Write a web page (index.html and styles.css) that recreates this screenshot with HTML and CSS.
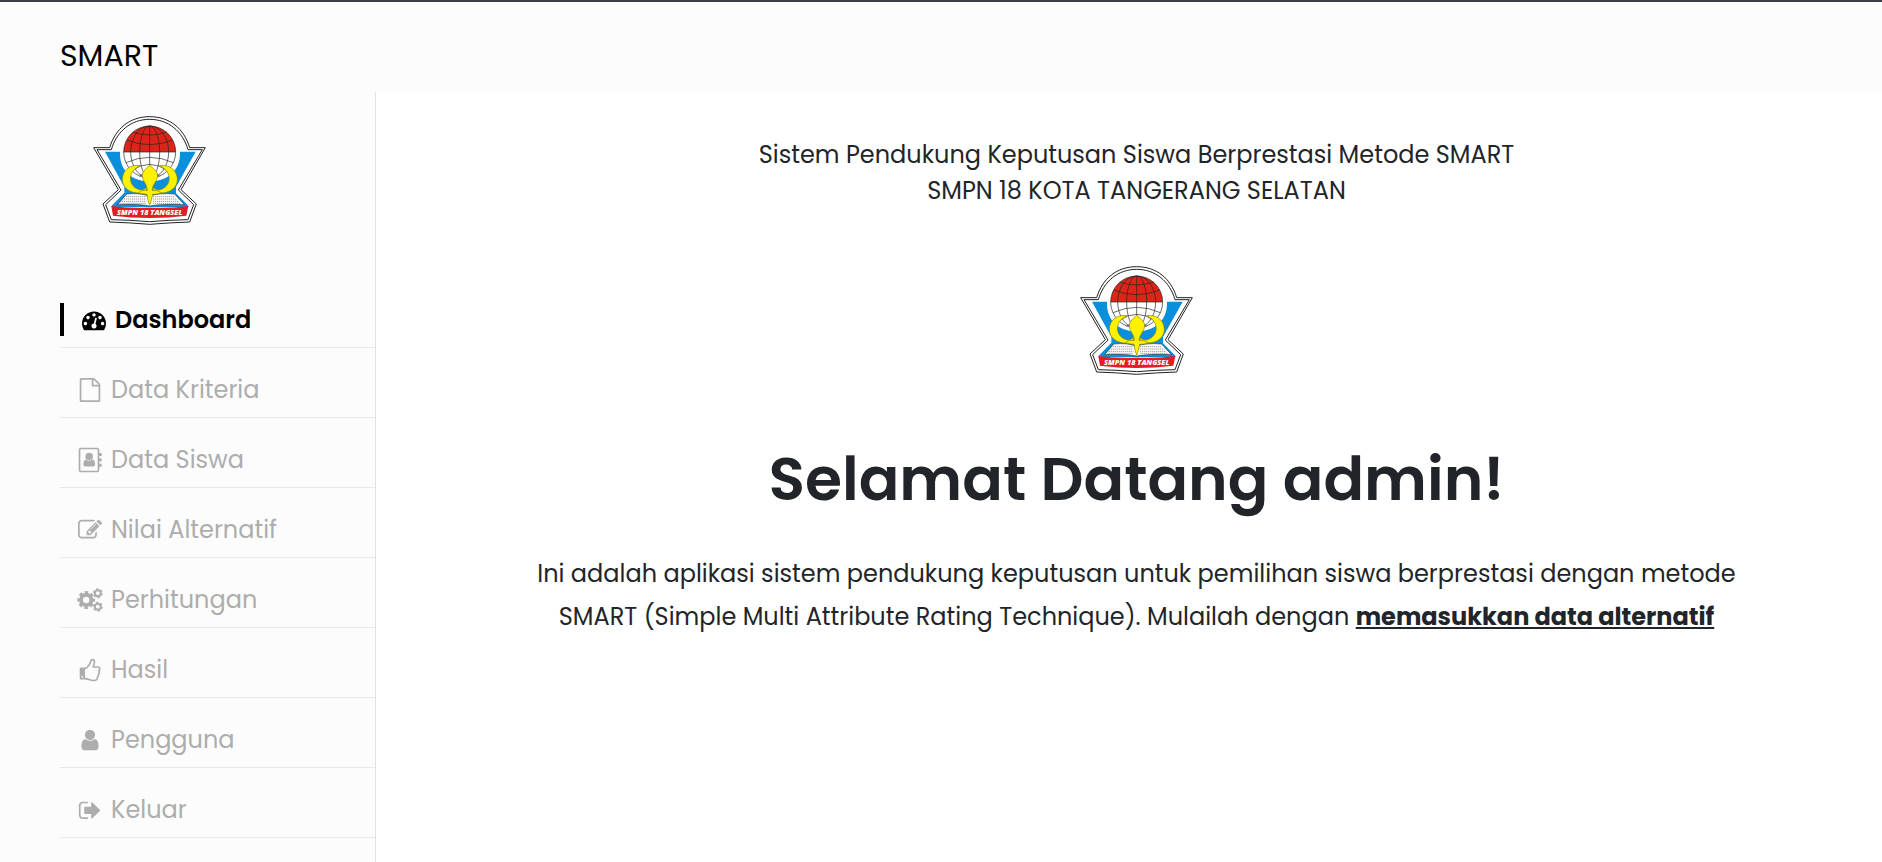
FILE: index.html
```html
<!DOCTYPE html>
<html lang="id">
<head>
<meta charset="utf-8">
<meta name="viewport" content="width=device-width, initial-scale=1">
<title>SMART</title>
<link rel="stylesheet" href="styles.css">
</head>
<body>
<svg class="defs" aria-hidden="true">
  <defs>
    <clipPath id="north"><rect x="100" y="40" width="190" height="92"/></clipPath>
    <symbol id="emblem" viewBox="0 0 390 372">
      <path d="M26 119H74C91 62 134 26 194 26S297 62 314 119H361L288 245L334 288L314 342Q254 344 194 349Q134 344 74 342L54 288L100 245Z" fill="#fff" stroke="#222" stroke-width="3"/>
      <path d="M36 125H79C95 70 138 34 194 34S293 70 309 125H352L280 246L326 290L309 335Q254 336 194 341Q134 336 79 335L62 290L108 246Z" fill="#fff" stroke="#222" stroke-width="3"/>
      <path d="M60 131H105C103 190 143 220 194 220S287 190 285 131H332L273 237V256L310 293V298H80V293L118 254V237Z" fill="#0a8fdc"/>
      <circle cx="194" cy="134" r="86" fill="#fff"/>
      <circle cx="194" cy="132" r="78" fill="#dd2418" clip-path="url(#north)"/>
      <g fill="none" stroke="#222" stroke-width="2">
        <circle cx="194" cy="132" r="78"/>
        <ellipse cx="194" cy="132" rx="57" ry="78"/>
        <ellipse cx="194" cy="132" rx="30" ry="78"/>
        <path d="M194 54V210M116 132H272M125 96Q194 124 263 96M143 72Q194 90 245 72M123 164Q194 132 265 164M140 188Q194 150 248 188M164 204Q194 180 224 204"/>
      </g>
      <path d="M98 290L125 258Q164 254 192 264Q226 254 269 258L298 290Q232 287 194 294Q160 287 98 290Z" fill="#fff" stroke="#333" stroke-width="2"/>
      <path d="M122 266H184M116 273H184M110 280H184M106 286H184M204 266H268M204 273H275M204 280H280M204 286H288" stroke="#888" stroke-width="2.500" stroke-dasharray="4 2"/>
      <g fill="#fff200" stroke="#8a8200" stroke-width="2">
        <path d="M165 173C132 168 112 190 112 214C112 241 137 256 164 255C179 254 187 244 187 237C181 243 174 246 167 246C129 238 124 192 165 173Z"/>
        <path d="M224 173C257 168 277 190 277 214C277 241 252 256 225 255C210 254 202 244 202 237C208 243 215 246 222 246C260 238 265 192 224 173Z"/>
        <path d="M194 172C186 180 172 189 172 203C172 220 187 228 187 247Q165 246 160 255Q180 259 186 259Q189 282 194 291Q199 282 203 259Q214 259 230 255Q220 246 201 247C202 228 218 220 218 203C218 189 203 180 194 172Z"/>
      </g>
      <path d="M79 294Q136 302 194 299Q252 302 310 294L304 323Q252 330 194 330Q136 330 84 323Z" fill="#e31d24"/>
      <text x="194" y="321" text-anchor="middle" class="emblem-text">SMPN 18 TANGSEL</text>
    </symbol>
  </defs>
</svg>

<header class="topbar"><a class="brand" href="#">SMART</a></header>

<div class="layout">
  <aside class="sidebar">
    <svg class="logo side-logo" role="img" aria-label="SMPN 18 Tangsel"><use href="#emblem"/></svg>
    <nav>
      <ul class="menu">
        <li><a class="active" href="#">
          <svg class="icon" viewBox="0 0 1792 1792"><path d="M384 1152q0-53-37.500-90.500t-90.500-37.500-90.500 37.500-37.500 90.500 37.500 90.500 90.500 37.500 90.500-37.500 37.500-90.500zm192-448q0-53-37.500-90.500t-90.500-37.500-90.500 37.500-37.500 90.500 37.500 90.500 90.500 37.500 90.500-37.500 37.500-90.500zm428 481l101-382q6-26-7.500-48.500t-38.500-29.500-48 6.500-30 39.500l-101 382q-60 5-107 43.500t-63 98.500q-20 77 20 146t117 89 146-20 89-117q16-60-6-117t-72-91zm660-33q0-53-37.500-90.500t-90.500-37.500-90.500 37.500-37.500 90.500 37.500 90.500 90.500 37.500 90.500-37.500 37.500-90.500zm-640-640q0-53-37.500-90.500t-90.500-37.500-90.500 37.500-37.500 90.500 37.500 90.500 90.500 37.500 90.500-37.500 37.500-90.500zm448 192q0-53-37.500-90.500t-90.500-37.500-90.500 37.500-37.500 90.500 37.500 90.500 90.500 37.500 90.500-37.500 37.500-90.500zm320 448q0 261-141 483-19 29-54 29h-1402q-35 0-54-29-141-221-141-483 0-182 71-348t191-286 286-191 348-71 348 71 286 191 191 286 71 348z"/></svg>
          <span>Dashboard</span></a></li>
        <li><a href="#">
          <svg class="icon" viewBox="0 0 1792 1792"><path d="M1596 380q28 28 48 76t20 88v1152q0 40-28 68t-68 28h-1344q-40 0-68-28t-28-68v-1600q0-40 28-68t68-28h896q40 0 88 20t76 48zm-444-244v376h376q-10-29-22-41l-313-313q-12-12-41-22zm384 1528v-1024h-416q-40 0-68-28t-28-68v-416h-768v1536h1280z"/></svg>
          <span>Data Kriteria</span></a></li>
        <li><a href="#">
          <svg class="icon" viewBox="0 0 24 24"><rect x="1.500" y=".5" width="19" height="23" rx="1.500" fill="none" stroke="currentColor" stroke-width="1.700"/><path d="M21 5h2.700v3H21zM21 10.400h2.700v3H21zM21 15.800h2.700v3H21z"/><circle cx="11.200" cy="8.500" r="3.800"/><path d="M5.400 16.600c0-3 .8-5 2.800-5.100 1.800 1.600 4.200 1.600 6 0 2 .1 2.900 2.100 2.900 5.100 0 1.200-.7 1.800-1.700 1.800H7.100c-1 0-1.700-.6-1.700-1.800z"/></svg>
          <span>Data Siswa</span></a></li>
        <li><a href="#">
          <svg class="icon" viewBox="0 0 1792 1792"><path d="M888 1184l116-116-152-152-116 116v56h96v96h56zm440-720q-16-16-33 1l-350 350q-17 17-1 33t33-1l350-350q17-17 1-33zm80 594v190q0 119-84.500 203.500t-203.500 84.500h-832q-119 0-203.500-84.500t-84.500-203.500v-832q0-119 84.500-203.500t203.500-84.500h832q63 0 117 25 15 7 18 23 3 17-9 29l-49 49q-14 14-32 8-23-6-45-6h-832q-66 0-113 47t-47 113v832q0 66 47 113t113 47h832q66 0 113-47t47-113v-126q0-13 9-22l64-64q15-15 35-7t20 29zm-96-738l288 288-672 672h-288v-288zm444 132l-92 92-288-288 92-92q28-28 68-28t68 28l152 152q28 28 28 68t-28 68z"/></svg>
          <span>Nilai Alternatif</span></a></li>
        <li><a href="#">
          <svg class="icon" viewBox="0 0 24 24"><g fill="none" stroke="currentColor"><circle cx="8.200" cy="12" r="5.200" stroke-width="4"/><circle cx="8.200" cy="12" r="7.700" stroke-width="2.400" stroke-dasharray="3.400 2.648" stroke-dashoffset="1.700"/><circle cx="19.800" cy="5.200" r="2.900" stroke-width="2"/><circle cx="19.800" cy="5.200" r="4.300" stroke-width="1.400" stroke-dasharray="2.300 2.203"/><circle cx="19.800" cy="18.700" r="2.900" stroke-width="2"/><circle cx="19.800" cy="18.700" r="4.300" stroke-width="1.400" stroke-dasharray="2.300 2.203"/></g></svg>
          <span>Perhitungan</span></a></li>
        <li><a href="#">
          <svg class="icon" viewBox="0 0 24 24"><path fill-rule="evenodd" d="M2.600 9.500H7v12H2.600q-.9 0-.9-.9V10.400q0-.9.900-.9zM4.300 18a.9.900 0 1 0 0 1.800.9.900 0 0 0 0-1.800z"/><path d="M7 10.600C9.500 10 10.400 7.600 11.600 6.200 12.900 4.700 12.100 1.600 14 1.600 17.800 1.600 16.300 6.300 15.300 9H19.800C22.200 9 22.300 11.800 20.900 12.700 21.900 13.900 21.400 15.300 20.400 16 20.800 17.300 20.300 18.500 19.400 19.100 19.600 21.500 18.300 22.500 16 22.500 12.200 22.600 10.300 20.700 7 20.600" fill="none" stroke="currentColor" stroke-width="1.700" stroke-linejoin="round"/></svg>
          <span>Hasil</span></a></li>
        <li><a href="#">
          <svg class="icon" viewBox="0 0 1792 1792"><path d="M1536 1399q0 109-62.500 187t-150.500 78h-854q-88 0-150.500-78t-62.500-187q0-85 8.500-160.500t31.500-152 58.500-131 94-89 134.500-34.500q131 128 313 128t313-128q76 0 134.500 34.500t94 89 58.500 131 31.500 152 8.500 160.500zm-256-887q0 159-112.500 271.500t-271.500 112.500-271.500-112.500-112.500-271.500 112.500-271.500 271.500-112.500 271.500 112.500 112.500 271.500z"/></svg>
          <span>Pengguna</span></a></li>
        <li><a href="#">
          <svg class="icon" viewBox="0 0 24 24"><path d="M9.300 4.500H5Q1.700 4.500 1.700 7.800V16.800Q1.700 20.200 5 20.200H9.300" fill="none" stroke="currentColor" stroke-width="1.700" stroke-linecap="round"/><path d="M7.100 8.700H13.200V5Q13.200 3.600 14.400 4.500L21.800 11.700Q22.400 12.300 21.800 12.900L14.400 20.200Q13.200 21 13.200 19.700V16H7.100Q6.200 16 6.200 15.100V9.600Q6.200 8.700 7.100 8.700Z"/></svg>
          <span>Keluar</span></a></li>
      </ul>
    </nav>
  </aside>

  <main class="content">
    <p class="subtitle">Sistem Pendukung Keputusan Siswa Berprestasi Metode SMART<br>SMPN 18 KOTA TANGERANG SELATAN</p>
    <svg class="logo" role="img" aria-label="SMPN 18 Tangsel"><use href="#emblem"/></svg>
    <h1 class="welcome">Selamat Datang admin!</h1>
    <p class="intro">Ini adalah aplikasi sistem pendukung keputusan untuk pemilihan siswa berprestasi dengan metode<br>SMART (Simple Multi Attribute Rating Technique). Mulailah dengan <a href="#">memasukkan data alternatif</a></p>
  </main>
</div>
</body>
</html>
```

FILE: styles.css
```css
* { box-sizing: border-box; }

body {
  margin: 0;
  min-height: 100vh;
  display: flex;
  flex-direction: column;
  background: #fcfcfc;
  color: #212529;
  font-family: Poppins, Inter, "Open Sans", sans-serif;
  font-size: 24px;
  line-height: 36px;
}

.defs { position: absolute; width: 0; height: 0; }

.topbar {
  height: 92px;
  padding: 0 60px;
  border-top: 2px solid #3b3f4a;
  display: flex;
  align-items: center;
}

.brand {
  padding-top: 18px;
  color: #000;
  font-size: 30px;
  text-decoration: none;
}

.layout { flex: 1; display: flex; }

.sidebar {
  flex: 0 0 376px;
  padding: 16px 0 24px 60px;
  border-right: 1px solid #dee2e6;
}

.logo { display: block; width: 130px; height: 124px; }
.side-logo { margin-left: 25px; }

.emblem-text {
  font: italic 900 22px "Open Sans", sans-serif;
  fill: #fff;
}

.menu { list-style: none; margin: 46px 0 0; padding: 0; }
.menu li { padding: 25px 0 11px; border-bottom: 1px solid #e9e9e9; }

.menu a {
  display: flex;
  align-items: center;
  gap: 9px;
  height: 33px;
  padding-left: 18px;
  color: #adadad;
  text-decoration: none;
}

.menu .active {
  border-left: 4px solid #000;
  color: #000;
  font-weight: 600;
}

.icon { flex: none; width: 24px; height: 24px; fill: currentColor; overflow: visible; }

.content {
  flex: 1;
  padding: 45px 0 44px 15px;
  background: #fff;
  display: flex;
  flex-direction: column;
  align-items: center;
  text-align: center;
}

.subtitle { margin: 0 0 49px; }

.welcome {
  margin: 61px 0 37px;
  font-size: 60px;
  line-height: 72px;
  font-weight: 600;
}

.intro { margin: 0; line-height: 43px; }
.intro a { color: inherit; font-weight: 700; }
```
